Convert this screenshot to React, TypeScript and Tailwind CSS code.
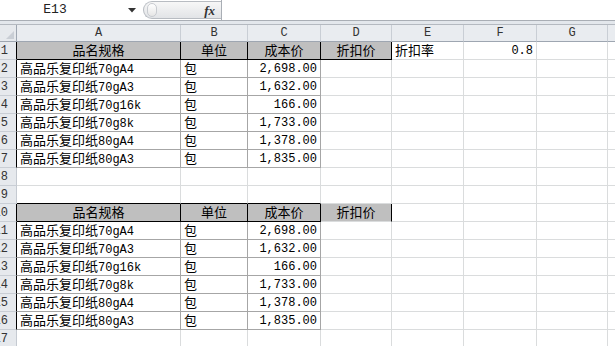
import React from "react";

const COLS = [
  { key: "A", w: 164 },
  { key: "B", w: 67 },
  { key: "C", w: 73 },
  { key: "D", w: 71 },
  { key: "E", w: 72 },
  { key: "F", w: 73 },
  { key: "G", w: 71 },
];

const GRID = "#dadcdd";
const DATA = "#a6a6a6";
const BLACK = "#000000";

type Cell = {
  text?: string;
  align?: "left" | "right" | "center";
  fill?: boolean;
  r?: string;
  b?: string;
};

const items = [
  ["高品乐复印纸70gA4", "2,698.00"],
  ["高品乐复印纸70gA3", "1,632.00"],
  ["高品乐复印纸70g16k", "166.00"],
  ["高品乐复印纸70g8k", "1,733.00"],
  ["高品乐复印纸80gA4", "1,378.00"],
  ["高品乐复印纸80gA3", "1,835.00"],
];

function Mixed({ text }: { text: string }) {
  const parts = text.split(/([\u4e00-\u9fff]+)/).filter(Boolean);
  return (
    <span className="whitespace-nowrap leading-none">
      {parts.map((p, i) =>
        /[\u4e00-\u9fff]/.test(p) ? (
          <span key={i} className="text-[13px] font-['Noto_Sans_CJK_SC',sans-serif]">
            {p}
          </span>
        ) : (
          <span key={i} className="text-[12px]">
            {p}
          </span>
        )
      )}
    </span>
  );
}

function headerRow(lastRight: string, dBottom: string): Cell[] {
  return [
    { text: "品名规格", align: "center", fill: true, r: BLACK, b: BLACK },
    { text: "单位", align: "center", fill: true, r: BLACK, b: BLACK },
    { text: "成本价", align: "center", fill: true, r: BLACK, b: BLACK },
    { text: "折扣价", align: "center", fill: true, r: lastRight, b: dBottom },
  ];
}

function dataRow(name: string, price: string, last: boolean): Cell[] {
  return [
    { text: name, r: DATA, b: last ? DATA : DATA },
    { text: "包", r: DATA, b: DATA },
    { text: price, align: "right", r: DATA, b: DATA },
  ];
}

function buildRows(): { left: string; cells: Cell[] }[] {
  const rows: { left: string; cells: Cell[] }[] = [];
  const r1 = headerRow(BLACK, BLACK);
  r1.push({ text: "折扣率" }, { text: "0.8", align: "right" });
  rows.push({ left: BLACK, cells: r1 });
  items.forEach((it, i) => rows.push({ left: BLACK, cells: dataRow(it[0], it[1], i === 5) }));
  rows.push({ left: "#c5cad1", cells: [] });
  rows.push({ left: "#c5cad1", cells: [{ b: BLACK }, { b: BLACK }, { b: BLACK }] });
  rows.push({ left: BLACK, cells: headerRow(BLACK, GRID) });
  items.forEach((it, i) => rows.push({ left: BLACK, cells: dataRow(it[0], it[1], i === 5) }));
  rows.push({ left: "#c5cad1", cells: [] });
  return rows;
}

function GridCell({ w, cell }: { w: number; cell?: Cell }) {
  const c = cell ?? {};
  const justify =
    c.align === "right" ? "justify-end pr-[3px]" : c.align === "center" ? "justify-center" : "justify-start pl-[3px]";
  return (
    <div
      className={`flex h-[18px] shrink-0 items-center border-r border-b ${justify} ${c.fill ? "bg-[#bfbfbf]" : "bg-white"}`}
      style={{ width: w, borderRightColor: c.r ?? GRID, borderBottomColor: c.b ?? GRID }}
    >
      {c.text && <Mixed text={c.text} />}
    </div>
  );
}

export default function App() {
  const rows = buildRows();
  return (
    <div className="h-[346px] w-[615px] overflow-hidden bg-white font-['Liberation_Mono','Noto_Sans_CJK_SC',monospace] text-[12px] text-black">
      {/* formula bar */}
      <div className="flex h-[21px] border-b border-[#a9aeb5] bg-white">
        <div className="flex w-[110px] items-center justify-center text-[13px] text-[#222]">E13</div>
        <div className="flex w-[33px] items-center justify-end pr-[7px]">
          <svg width="8" height="5" viewBox="0 0 8 5">
            <path d="M0 0h8L4 4.5z" fill="#333" />
          </svg>
        </div>
        <div className="mt-[1px] flex h-[18px] w-[78px] items-center rounded-l-full border border-r-0 border-[#b8bcc2] bg-gradient-to-b from-[#f7f7f7] to-[#e2e4e7]">
          <div className="ml-[3px] h-[14px] w-[10px] rounded-full border border-[#c8cbd0] bg-gradient-to-b from-white to-[#e6e6e6]" />
          <div className="ml-auto mr-[6px] font-['Liberation_Serif',serif] text-[13px] font-bold italic leading-none text-[#333]">
            fx
          </div>
        </div>
        <div className="w-px bg-[#a9aeb5]" />
        <div className="flex-1" />
      </div>
      <div className="h-[4px] border-b border-[#b4b9c0] bg-[#e3e7ec]" />

      {/* column headers */}
      <div className="flex h-[17px]">
        <div className="relative w-[17px] shrink-0 border-r border-b border-[#9ea6b1] bg-[#e6e9ed]">
          <svg className="absolute right-[2px] bottom-[2px]" width="8" height="8" viewBox="0 0 8 8">
            <path d="M8 0v8H0z" fill="#c9ced5" />
          </svg>
        </div>
        {COLS.map((c) => (
          <div
            key={c.key}
            className="flex shrink-0 items-center justify-center border-r border-b border-r-[#c9ced5] border-b-[#9ea6b1] bg-[#e9ecf0] text-[12px] leading-none text-[#333]"
            style={{ width: c.w }}
          >
            {c.key}
          </div>
        ))}
        <div className="flex-1 border-b border-[#9ea6b1] bg-[#e9ecf0]" />
      </div>

      {/* rows */}
      {rows.map((row, i) => (
        <div key={i} className="flex h-[18px]">
          <div
            className="flex h-[18px] w-[17px] shrink-0 items-center justify-end overflow-hidden border-r border-b border-b-[#c9ced5] bg-[#e6e9ed] pr-[8px] text-[12px] leading-none whitespace-nowrap text-[#333]"
            style={{ borderRightColor: row.left }}
          >
            {i + 1}
          </div>
          {COLS.map((c, j) => (
            <GridCell key={c.key} w={c.w} cell={row.cells[j]} />
          ))}
          <div className="h-[18px] flex-1 border-b border-[#dadcdd]" />
        </div>
      ))}
    </div>
  );
}
